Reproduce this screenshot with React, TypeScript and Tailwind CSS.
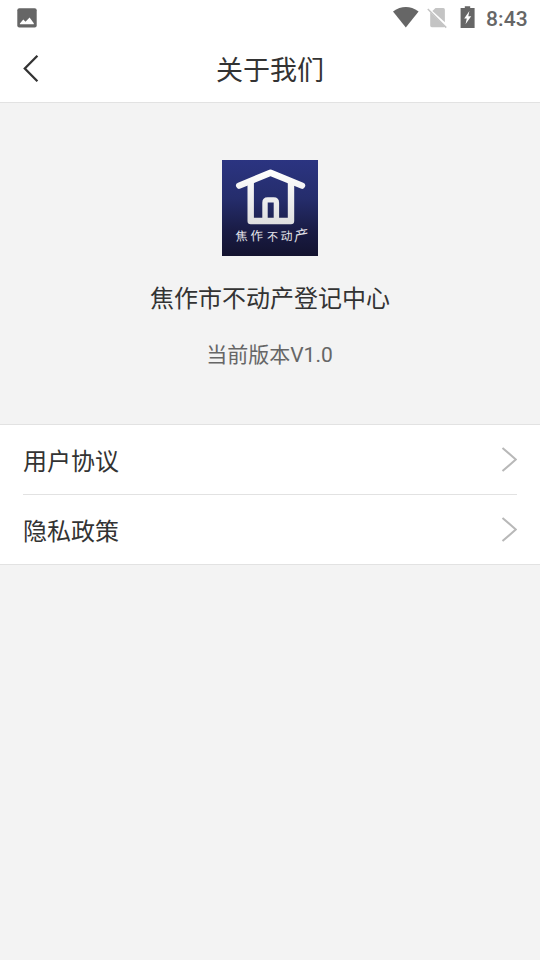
function StatusBar() {
  return (
    <div className="flex h-9 items-center justify-between pr-3 pl-[17px] text-[#666666]">
      <svg width="20" height="20" viewBox="0 0 20 20">
        <rect x="0.3" y="0.2" width="19.4" height="19.4" rx="2" fill="currentColor" />
        <path d="M2.9 16.2 V15.4 L6.3 11.6 L8.5 13.8 L12.6 9.6 L16.8 15.2 V16.2 Z" fill="#fff" />
      </svg>
      <div className="flex items-center">
        <svg width="27" height="22" viewBox="0 0 27 22">
          <path d="M0 4.4 Q12.8 -4.3 25.6 4.4 L12.8 20.5 Z" fill="currentColor" />
        </svg>
        <svg className="ml-[7px]" width="21" height="22" viewBox="0 0 21 22">
          <path d="M8.5 1.1 H16.3 Q17.9 1.1 17.9 2.7 V15.2 L5.4 4 Z" fill="#c4c4c4" />
          <path d="M3.2 5.6 L18 19.6 Q17.7 20.2 16.5 20.2 H4.8 Q3.2 20.2 3.2 18.5 Z" fill="#c4c4c4" />
          <path d="M0.8 2 L19.2 20.6" stroke="#c4c4c4" strokeWidth="1.5" />
        </svg>
        <svg className="mb-[2px] ml-3" width="15" height="22" viewBox="0 0 15 22">
          <path d="M4.8 0.2 H10.2 V2.1 H14.6 V22 H0.6 V2.1 H4.8 Z" fill="currentColor" />
          <path d="M9.4 5 L4.2 12.4 H6.8 L5.5 18.3 L11.2 10.2 H8.3 Z" fill="#fff" />
        </svg>
        <span className="ml-[11px] w-[42px] pt-[2px] font-['Roboto',sans-serif] text-[21px] leading-6 font-medium tracking-[0.1px] whitespace-nowrap">8:43</span>
      </div>
    </div>
  );
}

function Logo() {
  return (
    <svg className="block" width="96" height="96" viewBox="0 0 96 96">
      <defs>
        <linearGradient id="sky" x1="0" y1="0" x2="0" y2="1">
          <stop offset="0" stopColor="#2b3481" />
          <stop offset="0.4" stopColor="#252d6c" />
          <stop offset="0.75" stopColor="#191b43" />
          <stop offset="1" stopColor="#13132f" />
        </linearGradient>
        <linearGradient id="house" x1="0" y1="9" x2="0" y2="65" gradientUnits="userSpaceOnUse">
          <stop offset="0" stopColor="#ffffff" />
          <stop offset="1" stopColor="#dededf" />
        </linearGradient>
      </defs>
      <rect width="96" height="96" fill="url(#sky)" />
      <g fill="none" stroke="url(#house)" strokeWidth="6.4" strokeLinecap="round" strokeLinejoin="round">
        <path d="M17.2 25.6 L48.5 12.7 L80 25.6" />
        <path d="M28.7 21 V61 H69 V21" strokeLinecap="butt" />
        <path d="M43 61 V42.7 Q43 39.9 45.7 39.9 H51.7 Q54.4 39.9 54.4 42.7 V61" strokeWidth="5.4" strokeLinecap="butt" />
      </g>
      <g fill="#e2e2e8" fontFamily="Noto Sans CJK SC, sans-serif" fontSize="12">
        <text x="13.5" y="80.5" transform="rotate(-3 20 76)">焦</text>
        <text x="28.5" y="80.5" fontSize="12.5" transform="rotate(-3 35 76)">作</text>
        <text x="45" y="80.5" fontSize="11">不</text>
        <text x="58.5" y="80.5" transform="rotate(-3 65 76)">动</text>
        <text x="71" y="80" fontSize="14" fontStyle="italic" transform="rotate(-10 80 75)">产</text>
      </g>
    </svg>
  );
}

function Row({ label }: { label: string }) {
  return (
    <div className="flex h-[69px] items-center justify-between">
      <span className="pt-[5px] text-2xl leading-9">{label}</span>
      <svg width="16" height="26" viewBox="0 0 16 26" fill="none" stroke="#b8b8b8" strokeWidth="2">
        <path d="M1.5 0.9 L14.8 12.5 L1.5 24.1" />
      </svg>
    </div>
  );
}

export default function App() {
  return (
    <main className="h-[960px] w-[540px] overflow-hidden bg-[#f3f3f3] font-['Roboto','Noto_Sans_CJK_SC',sans-serif] text-[#333333]">
      <header className="h-[103px] border-b border-[#e2e2e2] bg-white">
        <StatusBar />
        <div className="grid h-[66px] grid-cols-[1fr_auto_1fr] items-center">
          <svg className="mb-px ml-[23px]" width="17" height="28" viewBox="0 0 17 28" fill="none" stroke="#333333" strokeWidth="2.3">
            <path d="M14.4 0.8 L1.8 13.5 L14.4 26.2" />
          </svg>
          <h1 className="pt-[4px] text-[27px] leading-10">关于我们</h1>
        </div>
      </header>
      <section className="flex h-[321px] flex-col items-center pt-[57px]">
        <Logo />
        <h2 className="mt-[25px] text-2xl leading-9">焦作市不动产登记中心</h2>
        <p className="mt-[22px] -ml-px text-[21px] leading-8 text-[#666666]">当前版本V1.0</p>
      </section>
      <section className="border-y border-[#e2e2e2] bg-white px-[23px]">
        <Row label="用户协议" />
        <div className="h-px bg-[#e2e2e2]" />
        <Row label="隐私政策" />
      </section>
    </main>
  );
}
